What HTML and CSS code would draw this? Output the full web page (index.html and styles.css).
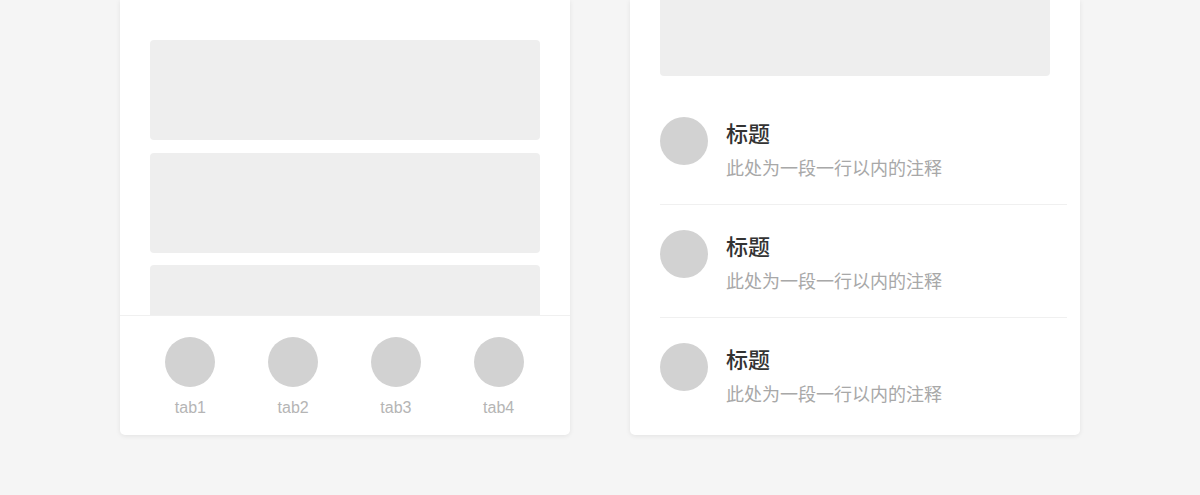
FILE: index.html
```html
<!DOCTYPE html>
<html lang="zh">
<head>
<meta charset="utf-8">
<link rel="stylesheet" href="styles.css">
</head>
<body>
<div class="page">
  <section class="card card-left">
    <div class="content">
      <div class="block"></div>
      <div class="block"></div>
      <div class="block"></div>
      <div class="block"></div>
    </div>
    <nav class="tabbar">
      <div class="tab"><span class="tab-icon"></span><span class="tab-label">tab1</span></div>
      <div class="tab"><span class="tab-icon"></span><span class="tab-label">tab2</span></div>
      <div class="tab"><span class="tab-icon"></span><span class="tab-label">tab3</span></div>
      <div class="tab"><span class="tab-icon"></span><span class="tab-label">tab4</span></div>
    </nav>
  </section>
  <section class="card card-right">
    <div class="banner"></div>
    <ul class="list">
      <li class="item">
        <span class="avatar"></span>
        <div class="text">
          <div class="title">标题</div>
          <div class="desc">此处为一段一行以内的注释</div>
        </div>
      </li>
      <li class="item">
        <span class="avatar"></span>
        <div class="text">
          <div class="title">标题</div>
          <div class="desc">此处为一段一行以内的注释</div>
        </div>
      </li>
      <li class="item">
        <span class="avatar"></span>
        <div class="text">
          <div class="title">标题</div>
          <div class="desc">此处为一段一行以内的注释</div>
        </div>
      </li>
    </ul>
  </section>
</div>
</body>
</html>
```
FILE: styles.css
```css
html, body {
  margin: 0;
  padding: 0;
  background: #f5f5f5;
  font-family: "Noto Sans CJK SC", "Noto Sans", sans-serif;
}

.page {
  display: flex;
  justify-content: center;
  gap: 60px;
  height: 495px;
  overflow: hidden;
}

.card {
  width: 450px;
  height: 435px;
  background: #ffffff;
  border-radius: 0 0 5px 5px;
  box-shadow: 0 1px 5px rgba(0, 0, 0, 0.08);
  overflow: hidden;
  display: flex;
  flex-direction: column;
}

/* left card */
.content {
  height: 275px;
  padding: 40px 30px 0;
  overflow: hidden;
  display: flex;
  flex-direction: column;
  gap: 12.5px;
}

.block {
  flex: none;
  height: 100px;
  background: #eeeeee;
  border-radius: 4px;
}

.tabbar {
  flex: 1;
  border-top: 1px solid #f0f0f0;
  padding: 21px 20px 0 19px;
  display: grid;
  grid-template-columns: repeat(4, 1fr);
  align-items: start;
}

.tab {
  display: flex;
  flex-direction: column;
  align-items: center;
}

.tab-icon {
  width: 50px;
  height: 50px;
  border-radius: 50%;
  background: #d2d2d2;
}

.tab-label {
  margin-top: 11px;
  font-family: "Liberation Sans", Arial, sans-serif;
  font-size: 16px;
  line-height: 20px;
  color: #b5b5b5;
}

/* right card */
.banner {
  flex: none;
  height: 76px;
  margin: 0 30px;
  background: #eeeeee;
  border-radius: 0 0 4px 4px;
}

.list {
  list-style: none;
  margin: 16px 0 0;
  padding: 0 13px 0 30px;
}

.item {
  display: flex;
  align-items: flex-start;
  padding: 25px 0 25px;
  border-bottom: 1px solid #f0f0f0;
}

.item:last-child {
  border-bottom: none;
}

.avatar {
  flex: none;
  width: 48px;
  height: 48px;
  border-radius: 50%;
  background: #d2d2d2;
}

.text {
  margin-left: 18px;
}

.title {
  font-size: 22px;
  font-weight: 500;
  line-height: 30px;
  color: #333333;
}

.desc {
  margin-top: 8px;
  font-size: 18px;
  line-height: 24px;
  color: #a8a8a8;
}
```
